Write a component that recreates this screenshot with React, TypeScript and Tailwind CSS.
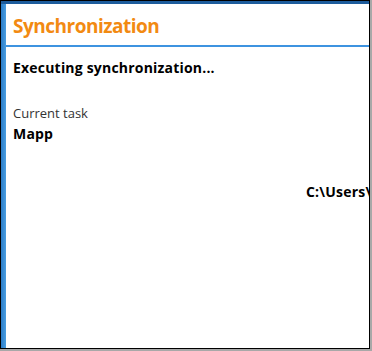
export default function App() {
  return (
    <div className="w-[372px] h-[351px] bg-[#a8a8a8]" style={{ fontFamily: '"Open Sans", sans-serif' }}>
      <div className="w-[370px] h-[349px] border border-black flex flex-col bg-white overflow-hidden">
        <div className="h-[3px] bg-[#1d5c9c] shrink-0" />
        <div className="flex flex-1 min-h-0">
          <div className="w-[5px] bg-gradient-to-r from-[#2a7cc8] to-[#4a9ee0] shrink-0" />
          <div className="flex-1 flex flex-col min-w-0 overflow-hidden">
            <div className="h-[41px] flex items-center pl-[7px] pt-[4px] shrink-0">
              <span className="text-[19px] font-bold text-[#f28a12] leading-none tracking-[-0.5px]">Synchronization</span>
            </div>
            <div className="h-[2px] bg-[#3d93e0] shrink-0" />
            <div className="pl-[7px] pt-[12px]">
              <div className="text-[14px] font-bold text-black leading-[18px] tracking-[0.2px]">Executing synchronization...</div>
              <div className="mt-[28px] text-[13px] text-[#333] leading-[16px]">Current task</div>
              <div className="mt-[4px] text-[14px] font-bold text-black leading-[18px] tracking-[0.2px]">Mapp</div>
              <div className="mt-[40px] ml-[293px] text-[14px] font-bold text-black leading-[18px] tracking-[0.2px] whitespace-nowrap">C:\Users\</div>
            </div>
          </div>
        </div>
      </div>
    </div>
  );
}
